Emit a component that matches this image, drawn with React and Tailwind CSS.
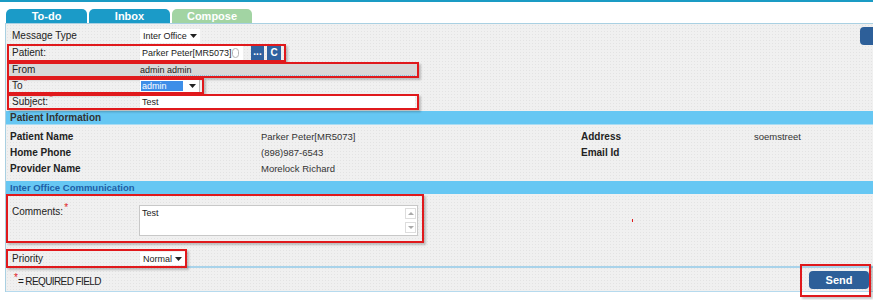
import React from 'react';

const Arrow = () => (
  <svg width="7" height="4" viewBox="0 0 7 4" className="shrink-0">
    <path d="M0 0 L7 0 L3.5 4 Z" fill="#222" />
  </svg>
);

const RedBox = ({ className = '', children }) => (
  <div
    className={`relative z-10 border-2 border-[#e0191c] shadow-[2px_2px_2px_rgba(0,0,0,0.22)] ${className}`}
  >
    {children}
  </div>
);

const Star = () => <span className="text-[#e0191c] text-[10px] leading-none self-start -mt-[2px] ml-[1px]">*</span>;

const Tab = ({ label, active }) => (
  <div
    className={`h-[14px] rounded-t-[5px] flex items-center justify-center font-bold text-[11px] text-white ${
      active ? 'bg-[#a2d4a3] w-[80px]' : 'bg-[#1b9bc8] w-[81px]'
    }`}
  >
    {label}
  </div>
);

const InfoRow = ({ a, b, c, d }) => (
  <div className="grid grid-cols-[251px_320px_173px_1fr] h-[16px] items-center">
    <span className="font-bold text-[10px] text-[#222]">{a}</span>
    <span className="text-[9.5px] text-[#333]">{b}</span>
    <span className="font-bold text-[10px] text-[#222]">{c}</span>
    <span className="text-[9.5px] text-[#333]">{d}</span>
  </div>
);

export default function App() {
  return (
    <div
      className="w-[873px] h-[300px] overflow-hidden bg-white text-[10px] leading-[14px] text-[#222]"
      style={{ fontFamily: '"Liberation Sans", Arial, sans-serif' }}
    >
      <div className="h-[2px] bg-[#1a9bc4]" />

      {/* tabs */}
      <div className="flex gap-[2px] pl-[6px] pt-[7px]">
        <Tab label="To-do" />
        <Tab label="Inbox" />
        <Tab label="Compose" active />
      </div>

      {/* panel */}
      <div className="ml-[5px] border-t border-l border-[#a9d0e2] bg-[#f0f0f0] bg-[radial-gradient(#e3e3e3_1px,transparent_1px)] bg-[length:3px_3px]">
        {/* message type */}
        <div className="h-[20px] pt-[3px] flex items-start">
          <div className="flex items-center h-[14px] mt-[2px] pl-[6px]">
            <span className="w-[128px]">Message Type</span>
            <div className="w-[60px] h-[14px] bg-white flex items-center justify-between px-[3px] text-[9px] whitespace-nowrap">
              <span>Inter Office</span>
              <Arrow />
            </div>
          </div>
          <div className="ml-auto w-[20px] h-[18px] -mr-[7px] rounded-[4px] bg-[#2d5f99]" />
        </div>

        {/* patient */}
        <RedBox className="ml-[1px] w-[279px] h-[18px] flex items-center pl-[3px]">
          <span className="w-[128px]">Patient:</span>
          <div className="w-[103px] h-[14px] bg-white flex items-center justify-between pl-[2px] pr-[4px] text-[9px] whitespace-nowrap">
            <span>Parker Peter[MR5073]</span>
            <span className="w-[10px] h-[10px] rounded-full border border-[#b5b5b5]" />
          </div>
          <div className="ml-[8px] w-[13px] h-[14px] bg-[#2f62a0] text-white font-bold flex items-center justify-center leading-none pb-[3px]">...</div>
          <div className="ml-[3px] w-[14px] h-[14px] bg-[#2f62a0] text-white font-bold flex items-center justify-center">C</div>
        </RedBox>

        {/* from */}
        <RedBox className="ml-[1px] w-[412px] h-[16px] flex items-center bg-[#d8d8d8]">
          <span className="w-[131px] pl-[3px]">From</span>
          <div className="flex-1 h-full flex items-center border-b border-dotted border-[#86c1df] mr-[2px] text-[9px]">
            admin admin
          </div>
        </RedBox>

        {/* to */}
        <RedBox className="ml-[1px] w-[197px] h-[16px] flex items-center pl-[3px]">
          <span className="w-[128px] flex">
            To
            <Star />
          </span>
          <div className="w-[60px] h-[12px] bg-white flex items-center justify-between pl-[1px] pr-[3px] border-r border-[#bbb]">
            <span className="bg-[#3d8ee8] text-white w-[42px] h-[10px] leading-[10px] pl-[1px] text-[9px]">admin</span>
            <Arrow />
          </div>
        </RedBox>

        {/* subject */}
        <RedBox className="ml-[1px] w-[412px] h-[16px] flex items-center pl-[3px]">
          <span className="w-[128px] flex">
            Subject:
            <Star />
          </span>
          <div className="w-[275px] h-[12px] bg-white flex items-center pl-[2px] text-[9px]">Test</div>
        </RedBox>

        {/* patient information */}
        <div className="mt-[1px] h-[14px] bg-[#66c7f3] border-b border-[#a9dcf3] flex items-center pl-[4px] font-bold text-[#333]">
          Patient Information
        </div>
        <div className="pl-[4px] pt-[4px] pb-[4px]">
          <InfoRow a="Patient Name" b="Parker Peter[MR5073]" c="Address" d="soemstreet" />
          <InfoRow a="Home Phone" b="(898)987-6543" c="Email Id" d="" />
          <InfoRow a="Provider Name" b="Morelock Richard" c="" d="" />
        </div>

        {/* inter office */}
        <div className="h-[13px] bg-[#66c7f3] flex items-center pl-[4px] font-bold text-[9.5px] text-[#1d5ea6]">
          Inter Office Communication
        </div>

        <div className="flex items-start">
          <RedBox className="w-[418px] h-[49px] flex items-start pt-[9px] pl-[4px]">
            <span className="w-[127px] flex">
              Comments:
              <Star />
            </span>
            <div className="w-[279px] h-[31px] bg-white border border-[#c8c8c8] flex justify-between">
              <span className="pl-[2px] pt-[1px] text-[9px] leading-[12px]">Test</span>
              <div className="w-[12px] flex flex-col justify-between py-[2px] pr-[1px]">
                <div className="h-[11px] border border-[#ddd] flex items-center justify-center">
                  <svg width="6" height="3" viewBox="0 0 6 3"><path d="M0 3 L6 3 L3 0 Z" fill="#aaa" /></svg>
                </div>
                <div className="h-[11px] border border-[#ddd] flex items-center justify-center">
                  <svg width="6" height="3" viewBox="0 0 6 3"><path d="M0 0 L6 0 L3 3 Z" fill="#aaa" /></svg>
                </div>
              </div>
            </div>
          </RedBox>
          <span className="ml-[208px] mt-[25px] w-[1px] h-[3px] bg-[#e0191c]" />
        </div>

        {/* priority */}
        <div className="pt-[6px]">
          <RedBox className="w-[181px] h-[19px] flex items-center pl-[4px]">
            <span className="w-[128px]">Priority</span>
            <div className="w-[45px] h-[13px] bg-white flex items-center justify-between px-[3px] text-[9px]">
              <span>Normal</span>
              <Arrow />
            </div>
          </RedBox>
          <div className="h-[2px] -mt-[2px] bg-[#a9d3ea]" />
        </div>

        {/* footer */}
        <div className="h-[24px] border-b border-[#b6daee] flex items-start justify-between">
          <div className="pl-[8px] pt-[5px] flex items-start">
            <span className="text-[#e0191c] text-[10px] leading-none">*</span>
            <span className="mt-[2px] text-[10px] tracking-[-0.6px]">= REQUIRED FIELD</span>
          </div>
          <RedBox className="-mt-[4px] mr-[2px] w-[71px] h-[33px] pl-[7px] pt-[5px]">
            <div className="w-[60px] h-[18px] rounded-[4px] bg-[#2d5f99] text-white font-bold text-[11px] flex items-center justify-center">
              Send
            </div>
          </RedBox>
        </div>
      </div>
    </div>
  );
}
